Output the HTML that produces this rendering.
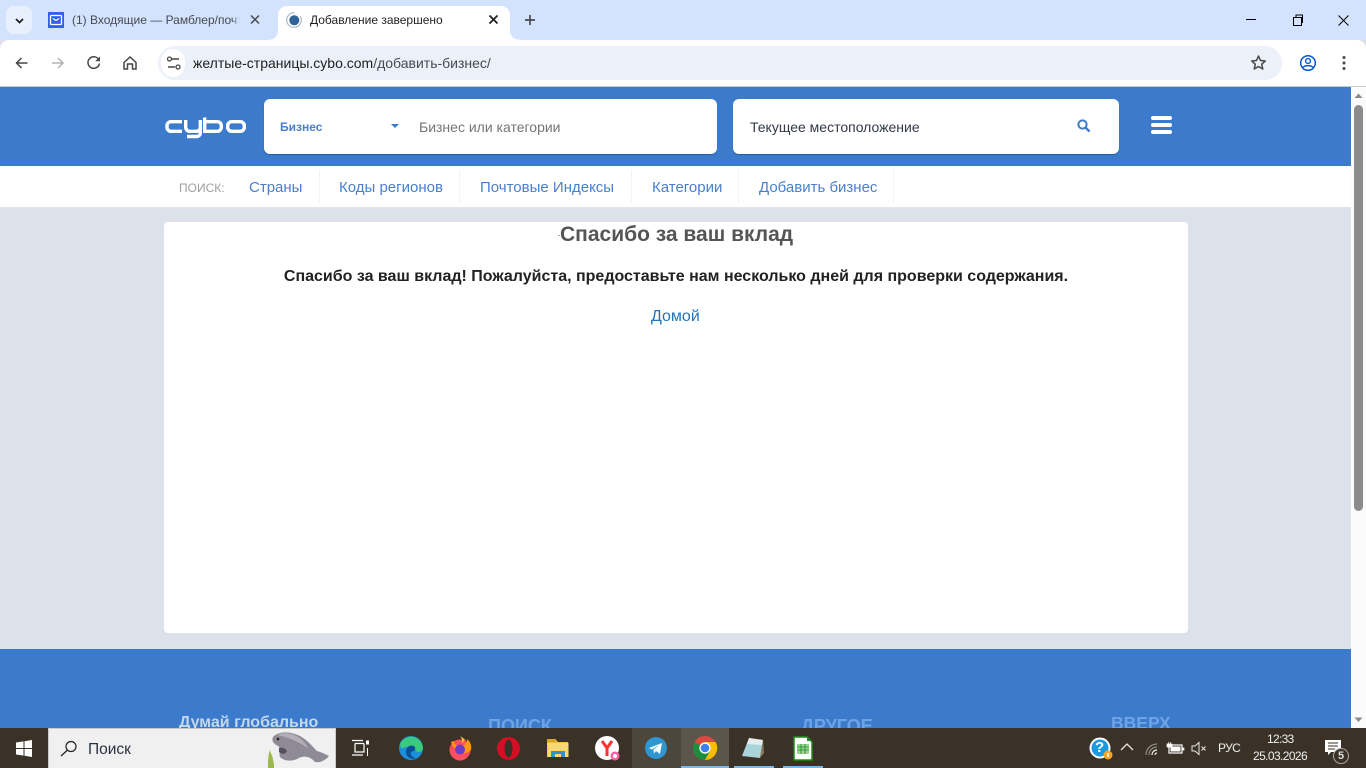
<!DOCTYPE html>
<html lang="ru"><head><meta charset="utf-8"><title>Добавление завершено</title>
<style>
html,body{margin:0;padding:0;width:1366px;height:768px;overflow:hidden;background:#dde1e9;font-family:"Liberation Sans","Noto Sans CJK SC",sans-serif}
.a{position:absolute;white-space:nowrap}
svg{position:absolute;overflow:visible}
.n{font-size:15px;color:#4a7fcb;top:179px;line-height:18px}
.sep{position:absolute;top:170px;width:1px;height:33px;background:#f2f3f5}
.f{color:#6ea4e6;font-weight:bold;font-size:18px;line-height:20px}
</style></head><body>
<!-- chrome -->
<div class="a" style="left:0;top:0;width:1366px;height:40px;background:#d3e3fd"></div>
<div class="a" style="left:6px;top:6px;width:26px;height:28px;background:#e8f0fe;border-radius:8px"></div>
<svg style="left:0;top:0" width="40" height="40"><path d="M16 19l3.500 3.500 3.500-3.500" fill="none" stroke="#1f1f1f" stroke-width="1.800"/></svg>
<div class="a" style="left:48px;top:12px;width:16px;height:16px;background:#3460ef"></div>
<svg style="left:48px;top:12px" width="16" height="16"><rect x="2.500" y="3.500" width="11" height="9" rx="1" fill="none" stroke="#fff" stroke-width="1.300"/><path d="M5 6.500l3 2 3-2" fill="none" stroke="#fff" stroke-width="1.200"/></svg>
<div class="a" style="left:72px;top:13px;width:168px;overflow:hidden;font-size:12px;line-height:15px;color:#474a50">(1) Входящие — Рамблер/почта</div>
<div class="a" style="left:232px;top:12px;width:8px;height:16px;background:linear-gradient(90deg,rgba(211,227,253,0),#d3e3fd)"></div>
<svg style="left:250px;top:14px" width="12" height="12"><path d="M1 1.500l8 8M9 1.500l-8 8" stroke="#474a50" stroke-width="1.500"/></svg>
<div class="a" style="left:278px;top:6px;width:232px;height:34px;background:#fff;border-radius:9px 9px 0 0"></div>
<svg style="left:266px;top:30px" width="256" height="10"><path d="M0 10q12 0 12-10v10zM256 10q-12 0-12-10v10z" fill="#fff"/></svg>
<svg style="left:286px;top:12px" width="16" height="16"><circle cx="8" cy="8" r="7.300" fill="none" stroke="#a5b3c4" stroke-width="1.100"/><circle cx="8.300" cy="8.300" r="5" fill="#2e6299"/><path d="M14.500 4a7.500 7.500 0 0 0-6-3" stroke="#fff" stroke-width="2" fill="none"/></svg>
<div class="a" style="left:310px;top:13px;font-size:12px;line-height:15px;color:#1f1f1f">Добавление завершено</div>
<svg style="left:488px;top:14px" width="12" height="12"><path d="M1.500 1.500l8 8M9.500 1.500l-8 8" stroke="#1f1f1f" stroke-width="1.700"/></svg>
<svg style="left:524px;top:14px" width="12" height="12"><path d="M6 1v10M1 6h10" stroke="#474a50" stroke-width="1.700"/></svg>
<svg style="left:1240px;top:10px" width="120" height="20"><path d="M6 9.500h10" stroke="#000" stroke-width="1"/><path d="M53.500 7.500h8v8h-8zM56 7.500v-2.500h6.500v7.500h-1" fill="none" stroke="#000" stroke-width="1"/><path d="M98.500 5.500l10 10M108.500 5.500l-10 10" stroke="#000" stroke-width="1"/></svg>
<!-- toolbar -->
<div class="a" style="left:0;top:40px;width:1366px;height:46px;background:#fff;border-radius:9px 9px 0 0"></div>
<div class="a" style="left:0;top:86px;width:1366px;height:1px;background:#c8ccd2"></div>
<svg style="left:0;top:40px" width="150" height="46"><path d="M27.500 23h-11M21.500 18l-5 5 5 5" fill="none" stroke="#474747" stroke-width="1.500"/><path d="M52 23h11M58 18l5 5-5 5" fill="none" stroke="#b1b3b6" stroke-width="1.500"/><path d="M99 20a5.800 5.800 0 1 0 .5 3.500" fill="none" stroke="#474747" stroke-width="1.500"/><path d="M100 16.500v4.800h-4.800z" fill="#474747"/><path d="M124 22.500l6-5.500 6 5.500v6.500h-3.500v-5h-5v5h-3.500z" fill="none" stroke="#474747" stroke-width="1.500"/></svg>
<div class="a" style="left:158px;top:46px;width:1124px;height:34px;background:#ebf0f9;border-radius:17px"></div>
<div class="a" style="left:161px;top:49px;width:24px;height:28px;background:#fff;border-radius:14px"></div>
<svg style="left:161px;top:49px" width="28" height="28"><path d="M11 10h7M7 18h7" stroke="#474747" stroke-width="1.400"/><circle cx="8.500" cy="10" r="2" fill="none" stroke="#474747" stroke-width="1.300"/><circle cx="17" cy="18" r="2" fill="none" stroke="#474747" stroke-width="1.300"/></svg>
<div class="a" style="left:193px;top:54px;font-size:14px;line-height:18px;color:#1f1f1f">желтые-страницы.cybo.com<span style="color:#474a50">/добавить-бизнес/</span></div>
<svg style="left:1250px;top:54px" width="17" height="17" viewBox="0 0 17 17"><path d="M8.500 2l2 4.500 4.800.5-3.600 3.200 1.100 4.800-4.300-2.500-4.300 2.500 1.100-4.800L1.700 7l4.800-.5z" fill="none" stroke="#474747" stroke-width="1.500" stroke-linejoin="round"/></svg>
<svg style="left:1299px;top:54px" width="18" height="18"><circle cx="9" cy="9" r="7.300" fill="none" stroke="#0b57d0" stroke-width="1.500"/><circle cx="9" cy="7" r="2.400" fill="none" stroke="#0b57d0" stroke-width="1.400"/><path d="M3.800 13.500c2-2.500 8.400-2.500 10.400 0" fill="none" stroke="#0b57d0" stroke-width="1.400"/></svg>
<svg style="left:1340px;top:54px" width="6" height="18"><circle cx="4" cy="3.500" r="1.500" fill="#474747"/><circle cx="4" cy="9" r="1.500" fill="#474747"/><circle cx="4" cy="14.500" r="1.500" fill="#474747"/></svg>
<!-- header -->
<div class="a" style="left:0;top:87px;width:1351px;height:79px;background:#3c7bcb"></div>
<svg style="left:165px;top:116px" width="82" height="24" fill="none" stroke="#fff" stroke-width="3.400"><path d="M17 5.700H6a4 4 0 0 0-4 4v1.600a4 4 0 0 0 4 4h11"/><path d="M20.700 4v7.300a4 4 0 0 0 4 4h6.600a4 4 0 0 0 4-4V4M35.300 11v6a3.500 3.500 0 0 1-3.500 3.500H22"/><path d="M39.700 1.500v13.800h12.600a4 4 0 0 0 4-4V9.700a4 4 0 0 0-4-4H39.700"/><rect x="62.700" y="5.700" width="16.600" height="9.600" rx="4"/></svg>
<div class="a" style="left:264px;top:99px;width:453px;height:55px;background:#fff;border-radius:6px;box-shadow:0 1px 1px #1f5c9f"></div>
<div class="a" style="left:280px;top:120px;font-size:12px;font-weight:bold;line-height:14px;color:#4a7fcb">Бизнес</div>
<svg style="left:391px;top:124px" width="8" height="4"><path d="M0 0h8l-4 4z" fill="#3c7bcb"/></svg>
<div class="a" style="left:419px;top:119px;font-size:14px;line-height:17px;color:#757575">Бизнес или категории</div>
<div class="a" style="left:733px;top:99px;width:386px;height:55px;background:#fff;border-radius:6px;box-shadow:0 1px 1px #1f5c9f"></div>
<div class="a" style="left:750px;top:119px;font-size:14px;line-height:17px;color:#333a45">Текущее местоположение</div>
<svg style="left:1077px;top:119px" width="14" height="14"><circle cx="5.500" cy="5.500" r="4.100" fill="none" stroke="#3c7bcb" stroke-width="2"/><path d="M8.500 8.500l4 4" stroke="#3c7bcb" stroke-width="2.400"/></svg>
<div class="a" style="left:1151px;top:116px;width:21px;height:4px;background:#fff;border-radius:2px"></div>
<div class="a" style="left:1151px;top:123px;width:21px;height:4px;background:#fff;border-radius:2px"></div>
<div class="a" style="left:1151px;top:130px;width:21px;height:4px;background:#fff;border-radius:2px"></div>
<!-- nav -->
<div class="a" style="left:0;top:166px;width:1351px;height:41px;background:#fff;border-bottom:1px solid #e3e5e9"></div>
<div class="a" style="left:179px;top:180px;font-size:12px;line-height:16px;color:#a0a0a0">ПОИСК:</div>
<div class="a n" style="left:249px">Страны</div><div class="sep" style="left:319px"></div>
<div class="a n" style="left:339px">Коды регионов</div><div class="sep" style="left:459px"></div>
<div class="a n" style="left:480px">Почтовые Индексы</div><div class="sep" style="left:631px"></div>
<div class="a n" style="left:652px">Категории</div><div class="sep" style="left:738px"></div>
<div class="a n" style="left:759px">Добавить бизнес</div><div class="sep" style="left:893px"></div>
<!-- content -->
<div class="a" style="left:164px;top:222px;width:1024px;height:411px;background:#fff;border-radius:4px"></div>
<div class="a" style="left:558px;top:235px;width:2px;height:1px;background:#aaa"></div>
<div class="a" style="left:560px;top:223px;font-size:21px;font-weight:bold;line-height:24px;color:#555">Спасибо за ваш вклад</div>
<div class="a" style="left:164px;top:268px;width:1024px;text-align:center;font-size:16px;font-weight:bold;line-height:18px;color:#222">Спасибо за ваш вклад! Пожалуйста, предоставьте нам несколько дней для проверки содержания.</div>
<div class="a" style="left:651px;top:308px;font-size:16px;line-height:18px;color:#1f74bb">Домой</div>
<!-- footer -->
<div class="a" style="left:0;top:649px;width:1351px;height:79px;background:#3c7bcb"></div>
<div class="a" style="left:179px;top:714px;font-size:16px;font-weight:bold;line-height:18px;color:#c3d8ef">Думай глобально</div>
<div class="a f" style="left:488px;top:716px">ПОИСК</div>
<div class="a f" style="left:801px;top:716px">ДРУГОЕ</div>
<div class="a f" style="left:1111px;top:713px;font-size:17.500px">ВВЕРХ</div>
<!-- scrollbar -->
<div class="a" style="left:1351px;top:87px;width:15px;height:641px;background:#fbfbfb"></div>
<svg style="left:1351px;top:87px" width="15" height="641"><path d="M3.500 11l4-4.500 4 4.500z" fill="#8a8a8a"/><path d="M3.500 630.500h8l-4 4.500z" fill="#8a8a8a"/></svg>
<div class="a" style="left:1354px;top:105px;width:9px;height:406px;background:#8c8c8c;border-radius:5px"></div>
<!-- taskbar -->
<div class="a" style="left:0;top:728px;width:1366px;height:40px;background:#3a3226"></div>
<svg style="left:16px;top:740px" width="17" height="17"><path d="M0 2.500L7.500 1.400V8H0zM8.500 1.300L16 0v8H8.500zM0 9h7.500v6.600L0 14.500zM8.500 9H16v8l-7.500-1.200z" fill="#fff"/></svg>
<div class="a" style="left:48px;top:728px;width:288px;height:40px;background:#f0f0f0;border:1px solid #c9c9c9;border-bottom:none;box-sizing:border-box"></div>
<svg style="left:60px;top:740px" width="18" height="17"><circle cx="11" cy="6.500" r="5" fill="none" stroke="#222" stroke-width="1.200"/><path d="M7.500 10L1 16" stroke="#222" stroke-width="1.300"/></svg>
<div class="a" style="left:88px;top:741px;font-size:15.500px;line-height:18px;color:#2a3340">Поиск</div>
<svg style="left:265px;top:728px" width="68" height="40"><path d="M8 9C12 4 22 3 30 6c10 3 16 11 22 17 4 1 8 3 12 5-4 5-10 7-14 6-4-5-10-7-16-4-7 4-14 3-18 0-4-4 2-8-3-12C9 16 6 13 8 9z" fill="#8f8b96"/><path d="M12 7c6-3 15-2 21 2 5 3 8 7 10 11-8-5-16-10-31-13z" fill="#b3afb8"/><path d="M14 20c3-1 6 0 8 3-2 4-6 3-8 1z" fill="#55505c"/><circle cx="13" cy="11" r="1.300" fill="#222"/><path d="M3 40c0-6 0-13 2-18 1 5 3 6 3 10 1 3 1 5 1 8z" fill="#9ab84b"/></svg>
<svg style="left:352px;top:739px" width="18" height="18"><path d="M0 1.500h11M3 4.500h9M3 4.500v8.500h9V4.500M0 16h11" fill="none" stroke="#fff" stroke-width="1.200"/><path d="M14.500 2v3h2V2zM15.500 9v8" fill="#fff" stroke="#fff" stroke-width="1"/></svg>
<svg style="left:399px;top:736px" width="25" height="24"><circle cx="12" cy="12" r="12" fill="#1b8fd8"/><path d="M1 8A12 12 0 0 1 24 12c0 4-5 5-7 3-1-4-6-6-10-4-4 2-5 2-6-3z" fill="#39c97f"/><path d="M7 17c-1-5 4-9 8-7 2 2 1 4 0 5-3 0-5 3-1 6 2 1 3 2 1 2-4 0-7-2-8-6z" fill="#0c4f97"/></svg>
<svg style="left:448px;top:736px" width="24" height="24"><circle cx="12" cy="14" r="10.500" fill="#ff4f5e"/><path d="M3 6c3 10 15 14 20 8 1-4-1-9-4-11 1 4-2 5-5 4 2 0 3 1 3 2l-7 1c-3-1-4-3-4-5z" fill="#ff980e"/><path d="M12 0c4 2 8 6 9 11 0-3-3-6-5-7 0 2-2 3-2 3 0-3 0-5-2-7z" fill="#ffbd2c"/><circle cx="12" cy="13.500" r="5" fill="#6e3bc8"/></svg>
<svg style="left:497px;top:737px" width="23" height="23"><circle cx="11.500" cy="11.500" r="11.500" fill="#d40e24"/><ellipse cx="11.500" cy="11.500" rx="4" ry="8.800" fill="#3a3226"/></svg>
<svg style="left:547px;top:739px" width="22" height="19"><path d="M0 1h9l2 2h10v15H0z" fill="#f0c046"/><path d="M0 0h9v3H0z" fill="#d8a526"/><rect x="0.500" y="4" width="21" height="14" fill="#fbd96c"/><path d="M4 18v-6h14v6h-4v-3H8v3z" fill="#2d91df"/></svg>
<svg style="left:595px;top:736px" width="26" height="26"><circle cx="12" cy="12" r="12" fill="#fff"/><path d="M7 5l5 7 5-7M12 12v8" fill="none" stroke="#f33" stroke-width="3"/><circle cx="20" cy="20" r="4.500" fill="#ff5fa4"/><circle cx="20" cy="20" r="2" fill="#fff"/></svg>
<div class="a" style="left:632px;top:728px;width:49px;height:40px;background:#4d463b"></div>
<svg style="left:645px;top:737px" width="22" height="22"><circle cx="11" cy="11" r="11" fill="#2e96d1"/><path d="M4 11l13-5-2 11-4-3-2 2.500-.6-4L15 7.500 6.500 12.500z" fill="#fff"/></svg>
<div class="a" style="left:681px;top:728px;width:48px;height:40px;background:#5c554a"></div>
<div class="a" style="left:681px;top:766px;width:48px;height:2px;background:#76b9ed"></div>
<svg style="left:693px;top:736px" width="24" height="24"><circle cx="12" cy="12" r="12" fill="#dd4a3c"/><path d="M12 12L1.600 6A12 12 0 0 0 12 24l5.500-9z" fill="#1e8e3e"/><path d="M12 6h10.600A12 12 0 0 1 12 24l5-9z" fill="#fbbc04"/><circle cx="12" cy="12" r="5.700" fill="#fff"/><circle cx="12" cy="12" r="4.300" fill="#3f7fe9"/></svg>
<div class="a" style="left:734px;top:766px;width:40px;height:2px;background:#76b9ed"></div>
<svg style="left:742px;top:737px" width="23" height="23"><path d="M7 1l14 2-3 18-18-2z" fill="#a9d4d9"/><path d="M7 1l14 2-1 5-15-1z" fill="#e7ecec"/><path d="M18 21l3-18 1 13z" fill="#8a7a5a"/></svg>
<div class="a" style="left:783px;top:766px;width:40px;height:2px;background:#76b9ed"></div>
<svg style="left:793px;top:736px" width="20" height="25"><path d="M1 1h13l5 5v18H1z" fill="#fff" stroke="#1f8a1f" stroke-width="1.500"/><path d="M14 0l5 5h-5z" fill="#1f8a1f"/><rect x="4" y="8" width="12" height="10" fill="#9bd49b"/><path d="M4 11h12M4 14h12M8 8v10M12 8v10" stroke="#1f8a1f" stroke-width=".8"/></svg>
<!-- tray -->
<svg style="left:1089px;top:737px" width="24" height="24"><circle cx="11" cy="11" r="10.500" fill="#fff"/><circle cx="11" cy="11" r="8.500" fill="#1c9ae0"/><circle cx="19" cy="18" r="4.500" fill="#f5a623"/><path d="M19 16v4" stroke="#fff" stroke-width="1.500"/></svg>
<div class="a" style="left:1095px;top:738px;font-size:15px;font-weight:bold;line-height:20px;color:#fff">?</div>
<svg style="left:1120px;top:742px" width="14" height="10"><path d="M1 8l6-6 6 6" fill="none" stroke="#e8e8e8" stroke-width="1.300"/></svg>
<svg style="left:1145px;top:742px" width="15" height="14"><path d="M1 13A11 11 0 0 1 12 2M4 13a8 8 0 0 1 8-8" fill="none" stroke="#8f8c85" stroke-width="1.200"/><path d="M7 13a5 5 0 0 1 5-5M10 13a2 2 0 0 1 2-2" fill="none" stroke="#eee" stroke-width="1.200"/></svg>
<svg style="left:1166px;top:741px" width="18" height="14"><rect x="3" y="4" width="13" height="8" fill="none" stroke="#fff" stroke-width="1.200"/><rect x="4.500" y="5.500" width="10" height="5" fill="#fff"/><path d="M16 7h2v2h-2zM1 3h5v3H1zM2.500 1v2M4.500 1v2" fill="#fff" stroke="#fff" stroke-width=".7"/></svg>
<svg style="left:1191px;top:742px" width="16" height="13"><path d="M1 4h3l4-3.500v12L4 9H1z" fill="none" stroke="#e8e8e8" stroke-width="1"/><path d="M10.500 4.500l4 4M14.500 4.500l-4 4" stroke="#e8e8e8" stroke-width="1"/></svg>
<div class="a" style="left:1218px;top:741px;font-size:12px;line-height:15px;letter-spacing:-.6px;color:#eee">РУС</div>
<div class="a" style="left:1267px;top:732px;font-size:12px;line-height:15px;letter-spacing:-.7px;color:#eee">12:33</div>
<div class="a" style="left:1253px;top:749px;font-size:12px;line-height:15px;letter-spacing:-.6px;color:#eee">25.03.2026</div>
<svg style="left:1325px;top:740px" width="25" height="24"><path d="M0 0h16v12H6l-3 3v-3H0z" fill="#fff"/><path d="M3 3h10M3 6h10M3 9h7" stroke="#3a3226" stroke-width="1"/><circle cx="16" cy="16" r="7.500" fill="#3a3226" stroke="#aaa" stroke-width="1"/></svg>
<div class="a" style="left:1338px;top:749px;font-size:11px;font-weight:bold;line-height:14px;color:#ddd">5</div>
</body></html>
